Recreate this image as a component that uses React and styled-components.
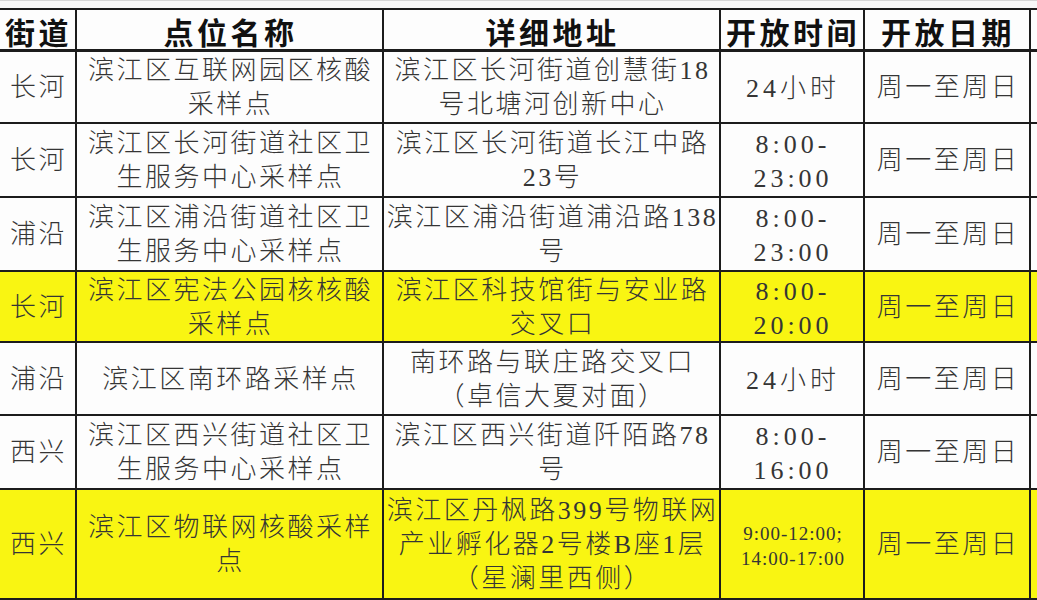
import React from "react";
import styled, { createGlobalStyle } from "styled-components";

const rows = [
  {
    street: "长河",
    name: ["滨江区互联网园区核酸", "采样点"],
    addr: ["滨江区长河街道创慧街18", "号北塘河创新中心"],
    time: ["24小时"],
    days: "周一至周日",
  },
  {
    street: "长河",
    name: ["滨江区长河街道社区卫", "生服务中心采样点"],
    addr: ["滨江区长河街道长江中路", "23号"],
    time: ["8:00-", "23:00"],
    days: "周一至周日",
  },
  {
    street: "浦沿",
    name: ["滨江区浦沿街道社区卫", "生服务中心采样点"],
    addr: ["滨江区浦沿街道浦沿路138", "号"],
    time: ["8:00-", "23:00"],
    days: "周一至周日",
  },
  {
    street: "长河",
    name: ["滨江区宪法公园核核酸", "采样点"],
    addr: ["滨江区科技馆街与安业路", "交叉口"],
    time: ["8:00-", "20:00"],
    days: "周一至周日",
    mark: true,
  },
  {
    street: "浦沿",
    name: ["滨江区南环路采样点"],
    addr: ["南环路与联庄路交叉口", "（卓信大夏对面）"],
    time: ["24小时"],
    days: "周一至周日",
  },
  {
    street: "西兴",
    name: ["滨江区西兴街道社区卫", "生服务中心采样点"],
    addr: ["滨江区西兴街道阡陌路78", "号"],
    time: ["8:00-", "16:00"],
    days: "周一至周日",
  },
  {
    street: "西兴",
    name: ["滨江区物联网核酸采样", "点"],
    addr: ["滨江区丹枫路399号物联网", "产业孵化器2号楼B座1层", "（星澜里西侧）"],
    time: ["9:00-12:00;", "14:00-17:00"],
    days: "周一至周日",
    mark: true,
    small: true,
  },
];

// row heights read off the sheet, in px
const heights = [72, 74, 74, 71, 73, 74, 110];

const GlobalStyle = createGlobalStyle`
  html, body {
    margin: 0;
    padding: 0;
    background: #fdfdfd;
    overflow: hidden;
  }
  body {
    font-family: "Liberation Serif", "Noto Sans CJK SC", serif;
  }
`;

const Page = styled.div`
  width: 1037px;
  height: 600px;
  overflow: hidden;
  background: #fdfdfd;
`;

const TopStrip = styled.div`
  height: 7px;
  border-top: 1px solid #d6d6d6;
  background: #f8f8f8;
`;

const Sheet = styled.div`
  display: grid;
  grid-template-columns: 77px 307px 337px 144px 166px 60px;
  width: 1091px;
  border-top: 2px solid #1c1c1c;
`;

const Cell = styled.div`
  box-sizing: border-box;
  display: flex;
  flex-direction: column;
  align-items: center;
  justify-content: center;
  border-right: 2px solid #1c1c1c;
  border-bottom: 2px solid #1c1c1c;
  background: ${(p) => (p.$mark ? "#f9f512" : "#fdfdfd")};
  color: #353535;
  font-size: 26px;
  font-weight: 300;
  line-height: 34px;
  letter-spacing: 2.5px;
  white-space: nowrap;
  padding: 2px 0 0 2px;
  overflow: hidden;
`;

const TimeCell = styled(Cell)`
  letter-spacing: 4px;
  padding-top: 4px;
`;

const HeadCell = styled(Cell)`
  height: 42px;
  border-bottom-width: 3px;
  color: #111;
  font-family: "Noto Sans CJK SC", sans-serif;
  font-weight: 700;
  font-size: 30px;
  letter-spacing: 3.5px;
  line-height: 38px;
  padding-top: 2px;
`;

const Line = styled.span`
  display: block;
`;

const SmallTime = styled.div`
  font-size: 19px;
  line-height: 25px;
  letter-spacing: 1px;
  text-align: center;
`;

const Lines = ({ items }) => items.map((t, i) => <Line key={i}>{t}</Line>);

export default function App() {
  return (
    <Page>
      <GlobalStyle />
      <TopStrip />
      <Sheet>
        <HeadCell>街道</HeadCell>
        <HeadCell>点位名称</HeadCell>
        <HeadCell>详细地址</HeadCell>
        <HeadCell>开放时间</HeadCell>
        <HeadCell>开放日期</HeadCell>
        <HeadCell />
        {rows.map((r, i) => {
          const h = { height: heights[i] };
          return (
            <React.Fragment key={i}>
              <Cell $mark={r.mark} style={h}>{r.street}</Cell>
              <Cell $mark={r.mark} style={h}>
                <Lines items={r.name} />
              </Cell>
              <Cell $mark={r.mark} style={h}>
                <Lines items={r.addr} />
              </Cell>
              <TimeCell $mark={r.mark} style={h}>
                {r.small ? (
                  <SmallTime>
                    <Lines items={r.time} />
                  </SmallTime>
                ) : (
                  <Lines items={r.time} />
                )}
              </TimeCell>
              <Cell $mark={r.mark} style={h}>{r.days}</Cell>
              <Cell $mark={r.mark} style={h} />
            </React.Fragment>
          );
        })}
      </Sheet>
    </Page>
  );
}
